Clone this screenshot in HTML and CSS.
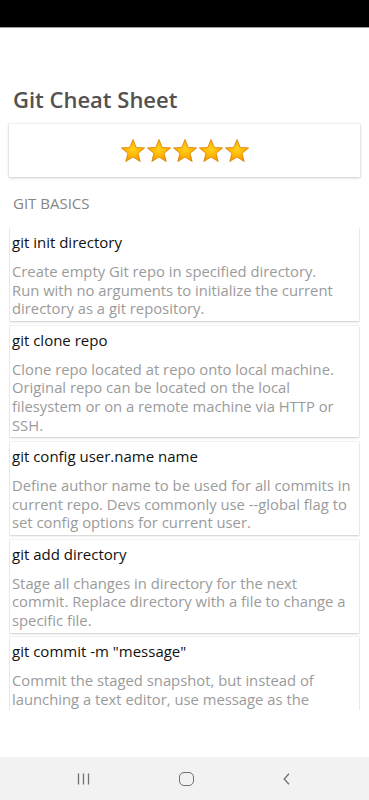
FILE: index.html
```html
<!DOCTYPE html>
<html lang="en">
<head>
    <meta charset="UTF-8">
    <meta name="viewport" content="width=device-width, initial-scale=1.0">
    <title>Git Cheat Sheet</title>
    <link rel="stylesheet" href="styles.css">
</head>
<body>
    <div class="status-bar"></div>

    <div class="screen">
        <h1 class="page-title">Git Cheat Sheet</h1>

        <div class="rating-card">
            <svg class="stars" width="130" height="26" viewBox="0 0 130 26">
                <defs>
                    <radialGradient id="gold" cx="50%" cy="45%" r="55%">
                        <stop offset="0%" stop-color="#ffd21a"/>
                        <stop offset="60%" stop-color="#ffb300"/>
                        <stop offset="100%" stop-color="#f29100"/>
                    </radialGradient>
                    <path id="star" d="M13 1.5 L16.2 9.4 L24.6 9.9 L18.1 15.3 L20.2 23.5 L13 19 L5.8 23.5 L7.9 15.3 L1.4 9.9 L9.8 9.4 Z"/>
                </defs>
                <use href="#star" x="0" fill="url(#gold)" stroke="#d98200" stroke-width="0.8"/>
                <use href="#star" x="26" fill="url(#gold)" stroke="#d98200" stroke-width="0.8"/>
                <use href="#star" x="52" fill="url(#gold)" stroke="#d98200" stroke-width="0.8"/>
                <use href="#star" x="78" fill="url(#gold)" stroke="#d98200" stroke-width="0.8"/>
                <use href="#star" x="104" fill="url(#gold)" stroke="#d98200" stroke-width="0.8"/>
            </svg>
        </div>

        <h2 class="section-title">GIT BASICS</h2>

        <div class="command-list">
            <div class="command">
                <div class="command-name">git init directory</div>
                <p class="command-desc">Create empty Git repo in specified directory.<br>Run with no arguments to initialize the current<br>directory as a git repository.</p>
            </div>
            <div class="command">
                <div class="command-name">git clone repo</div>
                <p class="command-desc">Clone repo located at repo onto local machine.<br>Original repo can be located on the local<br>filesystem or on a remote machine via HTTP or<br>SSH.</p>
            </div>
            <div class="command">
                <div class="command-name">git config user.name name</div>
                <p class="command-desc">Define author name to be used for all commits in<br>current repo. Devs commonly use --global flag to<br>set config options for current user.</p>
            </div>
            <div class="command">
                <div class="command-name">git add directory</div>
                <p class="command-desc">Stage all changes in directory for the next<br>commit. Replace directory with a file to change a<br>specific file.</p>
            </div>
            <div class="command">
                <div class="command-name">git commit -m "message"</div>
                <p class="command-desc">Commit the staged snapshot, but instead of<br>launching a text editor, use message as the<br>commit message.</p>
            </div>
        </div>
    </div>

    <div class="nav-bar">
        <svg class="nav-recent" width="13" height="12" viewBox="0 0 13 12">
            <path d="M1.5 0.5 V11.5 M6.5 0.5 V11.5 M11.5 0.5 V11.5" stroke="#707070" stroke-width="1.3"/>
        </svg>
        <span class="nav-home"></span>
        <svg class="nav-back" width="7" height="12" viewBox="0 0 7 12">
            <path d="M6 0.8 L1.2 6 L6 11.2" fill="none" stroke="#707070" stroke-width="1.3"/>
        </svg>
    </div>
</body>
</html>
```

FILE: styles.css
```css
* {
    margin: 0;
    padding: 0;
    box-sizing: border-box;
    font-family: 'Open Sans', sans-serif;
}

body {
    width: 369px;
    height: 800px;
    background: #fff;
    display: flex;
    flex-direction: column;
    overflow: hidden;
}

.status-bar {
    height: 28px;
    background: #000;
    border-bottom: 1px solid #9a9a9a;
}

.screen {
    flex: 1;
    display: flex;
    flex-direction: column;
    padding: 0 9px;
}

.page-title {
    margin-top: 56px;
    padding-left: 4px;
    font-size: 22px;
    font-weight: 600;
    line-height: 30px;
    color: #525252;
}

.rating-card {
    margin-top: 10px;
    height: 53px;
    background: #fff;
    box-shadow: 0 0 0 1px rgba(0, 0, 0, 0.04), 0 1px 3px rgba(0, 0, 0, 0.18);
    display: flex;
    justify-content: center;
    align-items: center;
}

.section-title {
    margin-top: 16px;
    padding-left: 4px;
    font-size: 15px;
    font-weight: 400;
    line-height: 20px;
    color: #858585;
}

.command-list {
    margin-top: 15px;
    height: 482px;
    overflow: hidden;
    display: flex;
    flex-direction: column;
    gap: 4.5px;
    padding: 0 1px;
}

.command {
    background: #fff;
    box-shadow: 0 0 0 1px rgba(0, 0, 0, 0.04), 0 1px 2px rgba(0, 0, 0, 0.16);
    padding: 4px 4px 3px 2px;
    flex-shrink: 0;
}

.command-name {
    font-size: 15px;
    line-height: 20px;
    color: #111;
}

.command-desc {
    margin-top: 10px;
    font-size: 14.8px;
    line-height: 18.7px;
    color: #9b9b9b;
    white-space: nowrap;
}

.nav-bar {
    height: 43px;
    background: #f2f2f2;
    display: flex;
    align-items: center;
    justify-content: space-between;
    padding: 0 79px 0 77px;
}

.nav-home {
    width: 15px;
    height: 14px;
    border: 1.3px solid #707070;
    border-radius: 5px;
}
```
